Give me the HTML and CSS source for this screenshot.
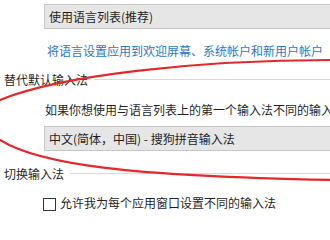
FILE: index.html
```html
<!DOCTYPE html>
<html lang="zh-CN">
<head>
<meta charset="utf-8">
<link rel="stylesheet" href="styles.css">
</head>
<body>
<div class="page">
  <div class="combo combo-first"><span>使用语言列表(推荐)</span></div>
  <a class="link" href="#">将语言设置应用到欢迎屏幕、系统帐户和新用户帐户</a>
  <div class="section section-first"><span class="section-title">替代默认输入法</span><span class="rule"></span></div>
  <p class="desc">如果你想使用与语言列表上的第一个输入法不同的输入</p>
  <div class="combo combo-second"><span>中文(简体，中国) - 搜狗拼音输入法</span></div>
  <div class="section section-second"><span class="section-title">切换输入法</span><span class="rule"></span></div>
  <label class="check-row"><span class="checkbox"></span><span>允许我为每个应用窗口设置不同的输入法</span></label>
</div>
<svg class="annotation" width="330" height="220" viewBox="0 0 330 220">
  <path d="M 332 60 C 200 60, 60 75, 0 100 C -20 110, -15 132, 0 140 C 40 165, 130 176, 332 180" fill="none" stroke="#e2282c" stroke-width="2.2" stroke-linecap="round"/>
</svg>
</body>
</html>
```
FILE: styles.css
```css
html, body {
  margin: 0;
  padding: 0;
  background: #ffffff;
}
body {
  width: 330px;
  height: 220px;
  overflow: hidden;
  position: relative;
  font-family: "Noto Sans CJK SC", "Microsoft YaHei", sans-serif;
  font-size: 12px;
  line-height: 16px;
  color: #1f1f1f;
}
.page {
  display: flex;
  flex-direction: column;
  width: 340px;
}
.combo {
  box-sizing: border-box;
  height: 25px;
  margin-left: 44px;
  background: #e6e6e6;
  border: 1px solid #c6c6c6;
  display: flex;
  align-items: center;
  padding-left: 4px;
  white-space: nowrap;
}
.combo-first {
  margin-top: 4px;
}
.link {
  margin-top: 14px;
  margin-left: 47px;
  color: #2878c0;
  text-decoration: none;
  white-space: nowrap;
}
.section {
  display: flex;
  align-items: center;
  margin-left: 4px;
  gap: 6px;
}
.section-first {
  margin-top: 13px;
}
.section-second {
  margin-top: 15px;
}
.section-title {
  white-space: nowrap;
}
.rule {
  flex: 1;
  height: 1px;
  background: #d8d8d8;
  margin-top: -2px;
}
.desc {
  margin: 14px 0 0 45px;
  white-space: nowrap;
}
.combo-second {
  margin-top: 8px;
}
.check-row {
  display: flex;
  align-items: center;
  margin: 13px 0 0 43px;
  gap: 4px;
  white-space: nowrap;
}
.checkbox {
  box-sizing: border-box;
  width: 13px;
  height: 13px;
  border: 1px solid #333333;
  background: #ffffff;
  margin-top: 3px;
}
.annotation {
  position: absolute;
  left: 0;
  top: 0;
  pointer-events: none;
}
```
